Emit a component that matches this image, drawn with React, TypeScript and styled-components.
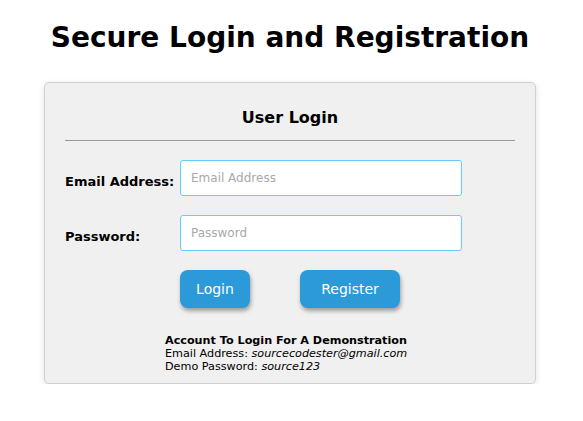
import styled, { createGlobalStyle } from "styled-components";

const GlobalStyle = createGlobalStyle`
  body {
    margin: 0;
    background: #ffffff;
    font-family: "DejaVu Sans", Verdana, sans-serif;
    color: #000;
  }
`;

const Page = styled.div`
  display: flex;
  flex-direction: column;
  align-items: center;
  padding: 20px 3px 0 0;
`;

const Title = styled.h1`
  margin: 0 0 26px;
  font-size: 28px;
  font-weight: 700;
  line-height: 36px;
`;

const Card = styled.div`
  box-sizing: border-box;
  width: 492px;
  padding: 20px 20px 10px;
  background-color: #f0f0f0;
  border: 1px solid #d0d0d0;
  border-radius: 5px;
  box-shadow: 0 2px 6px rgba(0, 0, 0, 0.12);
`;

const CardTitle = styled.h3`
  margin: 0;
  text-align: center;
  font-size: 16px;
  font-weight: 700;
  line-height: 29px;
`;

const Divider = styled.hr`
  margin: 8px 0 19px;
  border: none;
  border-top: 1px solid #999;
`;

const Row = styled.div`
  display: flex;
  align-items: center;
  margin-bottom: 19px;
`;

const Label = styled.label`
  width: 115px;
  font-size: 13px;
  font-weight: 700;
  padding-top: 7px;
`;

const Input = styled.input`
  box-sizing: border-box;
  width: 282px;
  height: 36px;
  padding: 0 10px;
  background: #fff;
  border: 1px solid #66ccff;
  border-radius: 3px;
  font-family: "DejaVu Sans", Tahoma, sans-serif;
  font-size: 12px;
  outline: none;
  &::placeholder {
    color: #a9a9a9;
  }
`;

const Actions = styled.div`
  display: flex;
  gap: 50px;
  padding-left: 115px;
  margin-bottom: 26px;
`;

const Button = styled.button<{ $wide?: boolean }>`
  width: ${(p) => (p.$wide ? "100px" : "70px")};
  height: 38px;
  background-color: #2c9ad8;
  color: #fff;
  border: none;
  border-radius: 8px;
  box-shadow: 1px 3px 4px rgba(0, 0, 0, 0.35);
  font-family: "DejaVu Sans", Tahoma, sans-serif;
  font-size: 14px;
  cursor: pointer;
`;

const Demo = styled.div`
  padding-left: 100px;
  font-size: 11.2px;
  line-height: 13px;
`;

const DemoHeading = styled.div`
  font-weight: 700;
`;

export default function App() {
  return (
    <>
      <GlobalStyle />
      <Page>
        <Title>Secure Login and Registration</Title>
        <Card>
          <CardTitle>User Login</CardTitle>
          <Divider />
          <Row>
            <Label>Email Address:</Label>
            <Input type="email" placeholder="Email Address" />
          </Row>
          <Row>
            <Label>Password:</Label>
            <Input type="password" placeholder="Password" />
          </Row>
          <Actions>
            <Button>Login</Button>
            <Button $wide>Register</Button>
          </Actions>
          <Demo>
            <DemoHeading>Account To Login For A Demonstration</DemoHeading>
            <div>
              Email Address: <i>sourcecodester@gmail.com</i>
            </div>
            <div>
              Demo Password: <i>source123</i>
            </div>
          </Demo>
        </Card>
      </Page>
    </>
  );
}
